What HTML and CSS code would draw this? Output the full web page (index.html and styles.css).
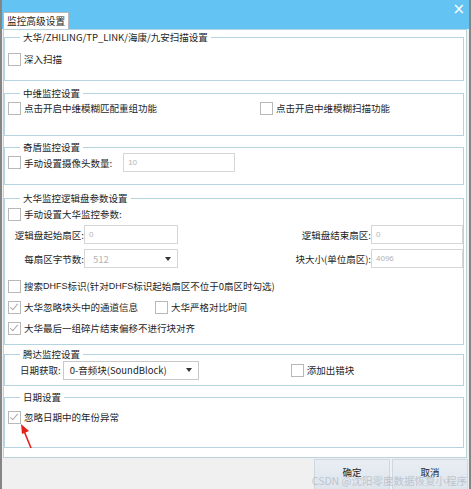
FILE: index.html
```html
<!DOCTYPE html>
<html lang="zh-CN">
<head>
  <meta charset="UTF-8">
  <title>监控高级设置</title>
  <link rel="stylesheet" href="styles.css">
</head>
<body>
  <div class="window">
    <div class="titlebar">
      <div class="tab">监控高级设置</div>
      <span class="close">×</span>
    </div>

    <div class="tabpage">
      <fieldset class="group g-scan">
        <legend>大华/ZHILING/TP_LINK/海康/九安扫描设置</legend>
        <div class="row">
          <label class="check"><span class="cb"></span>深入扫描</label>
        </div>
      </fieldset>

      <fieldset class="group g-zw">
        <legend>中维监控设置</legend>
        <div class="row">
          <label class="check"><span class="cb"></span>点击开启中维模糊匹配重组功能</label>
          <label class="check zw-right"><span class="cb"></span>点击开启中维模糊扫描功能</label>
        </div>
      </fieldset>

      <fieldset class="group g-qd">
        <legend>奇盾监控设置</legend>
        <div class="row">
          <label class="check"><span class="cb"></span>手动设置摄像头数量:</label>
          <span class="input qd-input">10</span>
        </div>
      </fieldset>

      <fieldset class="group g-dh">
        <legend>大华监控逻辑盘参数设置</legend>
        <div class="row">
          <label class="check"><span class="cb"></span>手动设置大华监控参数:</label>
        </div>
        <div class="params">
          <span class="plabel">逻辑盘起始扇区:</span>
          <span class="input">0</span>
          <span class="plabel">逻辑盘结束扇区:</span>
          <span class="input">0</span>
          <span class="plabel">每扇区字节数:</span>
          <span class="input combo">512<i class="caret"></i></span>
          <span class="plabel">块大小(单位扇区):</span>
          <span class="input">4096</span>
        </div>
        <div class="row dhfs">
          <label class="check"><span class="cb"></span>搜索<span class="latin">DHFS</span>标识(针对<span class="latin">DHFS</span>标识起始扇区不位于0扇区时勾选)</label>
        </div>
        <div class="row">
          <label class="check"><span class="cb on"></span>大华忽略块头中的通道信息</label>
          <label class="check strict"><span class="cb"></span>大华严格对比时间</label>
        </div>
        <div class="row">
          <label class="check"><span class="cb on"></span>大华最后一组碎片结束偏移不进行块对齐</label>
        </div>
      </fieldset>

      <fieldset class="group g-td">
        <legend>腾达监控设置</legend>
        <div class="row">
          <span class="date-label">日期获取:</span>
          <span class="input combo dark td-combo">0-音频块(SoundBlock)<i class="caret"></i></span>
          <label class="check td-right"><span class="cb"></span>添加出错块</label>
        </div>
      </fieldset>

      <fieldset class="group g-date">
        <legend>日期设置</legend>
        <div class="row">
          <label class="check"><span class="cb on"></span>忽略日期中的年份异常</label>
        </div>
      </fieldset>
    </div>

    <div class="buttons">
      <button>确定</button>
      <button>取消</button>
      <span class="watermark">CSDN @沈阳零度数据恢复小程序</span>
    </div>

    <svg class="arrow" width="20" height="30" viewBox="0 0 20 30">
      <line x1="13" y1="26" x2="6" y2="9" stroke="#e3201b" stroke-width="1.6"/>
      <polygon points="3,2 11,9 4,12" fill="#e3201b"/>
    </svg>
  </div>
</body>
</html>
```

FILE: styles.css
```css
html, body {
  margin: 0;
  padding: 0;
  background: #f0f0f0;
  font-family: "Noto Sans CJK SC", "Microsoft YaHei", sans-serif;
  font-size: 9.5px;
  color: #1e1e1e;
}
.window {
  position: relative;
  width: 467px;
  height: 489px;
  border-left: 2px solid #858585;
  border-right: 2px solid #858585;
  background: #f0f0f0;
  overflow: hidden;
}
.titlebar {
  height: 29px;
  background: #63c4f3;
  display: flex;
  align-items: flex-end;
  padding-left: 1px;
}
.tab {
  height: 16px;
  line-height: 16px;
  padding: 0 3px;
  background: #fff;
  border: 1px solid #b9b9b9;
  border-bottom: none;
  font-size: 9.7px;
}
.close {
  margin-left: auto;
  margin-right: 4px;
  align-self: flex-start;
  margin-top: 1px;
  color: #fff;
  font-size: 15px;
  line-height: 16px;
  font-family: "DejaVu Sans", sans-serif;
}
.tabpage {
  margin: 0 2px 0 1px;
  height: 427px;
  border: 1px solid #b9d2dc;
  background: #fff;
}
.group {
  margin: 0 2px 0 0;
  padding: 0 0 0 3px;
  border: 1px solid #b5d3de;
}
.group legend {
  margin-left: 12px;
  padding: 0 3px;
  line-height: 12px;
}
.row {
  display: flex;
  align-items: center;
  height: 16px;
}
.check {
  display: flex;
  align-items: center;
  white-space: nowrap;
}
.latin {
  font-family: "Liberation Sans", sans-serif;
  font-size: 9px;
}
.cb {
  width: 11px;
  height: 11px;
  border: 1px solid #b8b8b8;
  background: #fff;
  margin-right: 3px;
  position: relative;
}
.cb.on::after {
  content: "";
  position: absolute;
  left: 3px;
  top: 0px;
  width: 3px;
  height: 7px;
  border: solid #a9a9a9;
  border-width: 0 1.4px 1.4px 0;
  transform: rotate(40deg);
}
.input {
  box-sizing: border-box;
  display: flex;
  align-items: center;
  height: 19px;
  padding-left: 4px;
  border: 1px solid #d6d6d6;
  background: #fff;
  color: #b4b4b4;
  font-size: 8px;
  font-family: "Liberation Sans", sans-serif;
}
.combo {
  position: relative;
  font-size: 9.5px;
  font-family: "Noto Sans CJK SC", sans-serif;
  padding-left: 8px;
}
.combo.dark {
  color: #1e1e1e;
  border-color: #c8c8c8;
  padding-left: 6px;
}
.caret {
  margin-left: auto;
  margin-right: 6px;
  width: 0;
  height: 0;
  border-left: 3.5px solid transparent;
  border-right: 3.5px solid transparent;
  border-top: 4px solid #333;
}

.g-scan {
  margin-top: 1px;
  padding-top: 8px;
  padding-bottom: 13px;
}
.g-zw {
  margin-top: 6px;
  padding-top: 1px;
  padding-bottom: 19px;
}
.zw-right {
  margin-left: 103px;
}
.g-qd {
  margin-top: 5px;
  padding-top: 0;
  padding-bottom: 12px;
}
.g-qd .row {
  height: 19px;
}
.qd-input {
  width: 112px;
  margin-left: 11px;
}
.g-dh {
  margin-top: 7px;
  padding-top: 2px;
  padding-bottom: 8px;
}
.params {
  display: grid;
  grid-template-columns: 79px 94px 1fr 92px;
  row-gap: 5px;
  margin-top: 3px;
  margin-left: -3px;
  align-items: center;
}
.plabel {
  text-align: right;
  white-space: nowrap;
}
.dhfs {
  margin-top: 10px;
}
.dhfs + .row, .dhfs + .row + .row {
  margin-top: 5px;
}
.strict {
  margin-left: 17px;
}
.g-td {
  margin-top: 3px;
  padding-top: 0;
  padding-bottom: 5px;
}
.g-td .row {
  height: 20px;
  padding-left: 12px;
}
.td-combo {
  width: 136px;
  margin-left: 2px;
}
.td-right {
  margin-left: 92px;
}
.g-date {
  margin-top: 5px;
  padding-top: 6px;
  padding-bottom: 22px;
}
.buttons {
  display: flex;
  justify-content: flex-end;
  gap: 2px;
  padding: 1px 1px 0 0;
  position: relative;
}
.buttons button {
  width: 76px;
  height: 32px;
  border: 1px solid #cfd8e2;
  background: linear-gradient(#e9eef4, #dde4ec);
  font-family: "Noto Sans CJK SC", sans-serif;
  font-size: 9.5px;
  color: #1e1e1e;
  padding: 0 0 6px;
}
.watermark {
  position: absolute;
  right: 2px;
  top: 15px;
  color: rgba(150, 160, 170, 0.5);
  font-size: 10.5px;
  white-space: nowrap;
}
.arrow {
  position: absolute;
  left: 16px;
  top: 422px;
}
```
